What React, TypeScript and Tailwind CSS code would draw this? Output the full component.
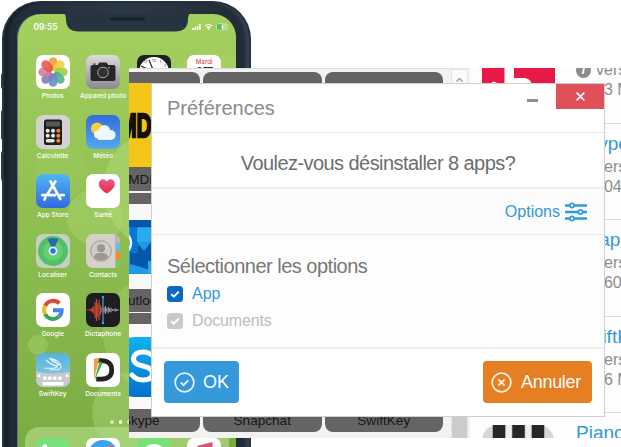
import React from "react";

const svgBox = "block size-[34px]";

function Photos() {
  const petals = ["#f5973b", "#eed13c", "#9bcc4e", "#52ad8b", "#5a91c9", "#8079b4", "#d57a98", "#e45549"];
  return (
    <svg className={svgBox} viewBox="0 0 34 34">
      <rect width="34" height="34" rx="7" fill="#fff" />
      {petals.map((c, i) => (
        <rect key={c} x="12.7" y="2.3" width="8.6" height="13.4" rx="4.3" fill={c} opacity=".87" transform={`rotate(${i * 45} 17 17)`} />
      ))}
    </svg>
  );
}

function Camera() {
  return (
    <svg className={svgBox} viewBox="0 0 34 34">
      <defs>
        <linearGradient id="cam" x2="0" y2="1"><stop stopColor="#dcdcdc" /><stop offset="1" stopColor="#8b8b8d" /></linearGradient>
      </defs>
      <rect width="34" height="34" rx="7" fill="url(#cam)" />
      <path d="M6.5 10h5.3l1.4-2.6h7.5l1.5 2.6h5.3q2 0 2 2v12q0 2-2 2h-21q-2 0-2-2V12q0-2 2-2Z" fill="#262728" />
      <rect x="7" y="8.6" width="3" height="1" fill="#333" />
      <circle cx="17" cy="17.5" r="5.3" fill="#303133" stroke="#aaa" strokeWidth="1" />
      <circle cx="23" cy="12.7" r=".8" fill="#e5c24b" />
    </svg>
  );
}

function Calculator() {
  return (
    <svg className={svgBox} viewBox="0 0 34 34">
      <rect width="34" height="34" rx="7" fill="#d3d2d0" />
      <rect x="8" y="4.5" width="18" height="25.5" rx="2.5" fill="#1f1e1f" />
      <rect x="10" y="6.5" width="14" height="5" rx=".8" fill="#58595b" />
      {[15.8, 20.8, 25.8].map((y, r) =>
        [11.7, 17, 22.3].map((x, c) =>
          r === 2 && c === 1 ? null : r === 2 && c === 0 ? (
            <rect key={c} x="9.7" y="24" width="9" height="3.6" rx="1.8" fill="#e6e6e6" />
          ) : (
            <circle key={`${r}${c}`} cx={x} cy={y} r="2" fill={c === 2 ? "#f28a2b" : "#e6e6e6"} />
          ),
        ),
      )}
    </svg>
  );
}

function Weather() {
  return (
    <svg className={svgBox} viewBox="0 0 34 34">
      <defs>
        <linearGradient id="met" x2="0" y2="1"><stop stopColor="#326cdb" /><stop offset="1" stopColor="#57a9ee" /></linearGradient>
      </defs>
      <rect width="34" height="34" rx="7" fill="url(#met)" />
      <circle cx="11" cy="13.5" r="6" fill="#f8cf45" />
      <g fill="#f0f6fc">
        <circle cx="18.5" cy="15.6" r="5.6" /><circle cx="12" cy="19.5" r="3.9" /><circle cx="24.7" cy="20" r="4.9" />
        <rect x="12" y="16" width="13" height="8.9" />
      </g>
    </svg>
  );
}

function AppStore() {
  return (
    <svg className={svgBox} viewBox="0 0 34 34">
      <defs>
        <linearGradient id="sto" x2="0" y2="1"><stop stopColor="#4fb6f4" /><stop offset="1" stopColor="#3269e1" /></linearGradient>
      </defs>
      <rect width="34" height="34" rx="7" fill="url(#sto)" />
      <path d="m14.6 7.5 9.8 17.6M19.4 7.5 10.8 21.2M6.3 21.2H19M24.4 21.2h3.3M9.3 24l-.9 1.6" stroke="#fff" strokeWidth="2.7" strokeLinecap="round" fill="none" />
    </svg>
  );
}

function Health() {
  return (
    <svg className={svgBox} viewBox="0 0 34 34">
      <defs>
        <linearGradient id="hea" x2="0" y2="1"><stop stopColor="#e9579b" /><stop offset="1" stopColor="#e22e36" /></linearGradient>
      </defs>
      <rect width="34" height="34" rx="7" fill="#fff" />
      <path d="M20.8 19.5c-5-3.2-8-6.2-8-9.6 0-5 6-6.2 8-2.4 2-3.8 8-2.6 8 2.4 0 3.4-3 6.4-8 9.6Z" fill="url(#hea)" />
    </svg>
  );
}

function FindMy() {
  return (
    <svg className={svgBox} viewBox="0 0 34 34">
      <rect width="34" height="34" rx="7" fill="#c5cfc4" />
      <circle cx="17" cy="17" r="15" fill="#50c165" />
      <circle cx="17" cy="17" r="9.8" fill="#67ce73" />
      <path d="M17 17 11.5 5Q17 3 22.5 5Z" fill="#286ca7" />
      <circle cx="17" cy="17" r="4.4" fill="#e8f2ff" />
      <circle cx="17" cy="17" r="2.7" fill="#286ee5" />
    </svg>
  );
}

function Contacts() {
  return (
    <svg className={svgBox} viewBox="0 0 34 34">
      <defs><clipPath id="con"><rect width="34" height="34" rx="7" /></clipPath></defs>
      <g clipPath="url(#con)">
        <rect width="34" height="34" fill="#d5d1c8" />
        <rect x="30" width="4" height="8.5" fill="#bbb5ac" /><rect x="30" y="8.5" width="4" height="8.5" fill="#67bcee" />
        <rect x="30" y="17" width="4" height="9" fill="#f28b24" /><rect x="30" y="26" width="4" height="8" fill="#6fcd62" />
        <path d="M29.5 0v34" stroke="#aaa69c" strokeWidth=".7" />
      </g>
      <circle cx="15" cy="17" r="10.3" fill="#d2cdc4" stroke="#9d9890" strokeWidth=".9" />
      <circle cx="15" cy="14.2" r="4" fill="#9b9690" />
      <path d="M7.8 23.3c.9-4 3.7-4 5-4.4h4.4c1.5.5 4.2.5 5 4.4-3.9 4.2-10.5 4.2-14.4 0Z" fill="#9b9690" />
    </svg>
  );
}

function Google() {
  return (
    <svg className={svgBox} viewBox="0 0 34 34">
      <rect width="34" height="34" rx="7" fill="#fff" />
      <g fill="none" strokeWidth="3.9">
        <path d="M23.4 10.4A8.8 8.8 0 0 0 9.1 12.9" stroke="#e04837" />
        <path d="M9.1 12.9a8.8 8.8 0 0 0 0 8.2" stroke="#f2bb24" />
        <path d="M9.1 21.1a8.8 8.8 0 0 0 13.6 2.7" stroke="#3ba55b" />
        <path d="M22.7 23.8a8.8 8.8 0 0 0 3-6.5H17" stroke="#4184ef" />
      </g>
    </svg>
  );
}

function VoiceMemo() {
  const bars = [0.5, 0.5, 1, 1.5, 2.5, 4, 8, 11, 7, 10, 5, 2.5];
  return (
    <svg className={svgBox} viewBox="0 0 34 34">
      <rect width="34" height="34" rx="7" fill="#1d1d20" />
      <path d="M4 7v22M9 5v24M24 5v24M29 7v22" stroke="#424247" strokeWidth=".7" strokeDasharray=".7 3" />
      {bars.map((h, i) => <path key={i} d={`M${1.4 + i * 1.3} ${17 - h}v${2 * h}`} stroke="#cb4538" strokeWidth="1.2" />)}
      {[3, 5, 2, 4, 2, 3, 1, 1, 2, 1, 1].map((h, i) => <path key={i} d={`M${18 + i * 1.4} ${17 - h * 0.8}v${1.6 * h}`} stroke="#c6c6cc" strokeWidth=".9" />)}
      <path d="M17 4v26" stroke="#4d9de7" strokeWidth="1.2" /><circle cx="17" cy="4" r="1.2" fill="#4d9de7" /><circle cx="17" cy="30" r="1.2" fill="#4d9de7" />
    </svg>
  );
}

function SwiftKey() {
  return (
    <svg className={svgBox} viewBox="0 0 34 34">
      <defs>
        <clipPath id="swi"><rect width="34" height="34" rx="7" /></clipPath>
        <linearGradient id="swb" x2="0" y2="1"><stop stopColor="#55b3dc" /><stop offset="1" stopColor="#7dc1df" /></linearGradient>
      </defs>
      <g clipPath="url(#swi)">
        <rect width="34" height="34" fill="#c7c9cc" />
        <path d="M0 0h34v18.5q-17 4-34 0Z" fill="url(#swb)" />
      </g>
      <path d="M8.5 15.3h8q7-.5 4.5-5-2-3.2-6-5 9 2.5 10 8 0 4-7 3.4h-4.5M10 7q5 5 12 6.2M13 5q5 5 12 7" fill="none" stroke="#e7f6fd" strokeWidth="1.1" />
      {[8, 13, 18, 23].map((x) => <rect key={x} x={x - 0.8} y="23.5" width="3.4" height="3.3" rx=".5" fill="#fff" />)}
      <path d="M3 21.5v2.5M31 21.5v2.5" stroke="#fff" strokeWidth="2.5" />
      <rect x="6.5" y="29" width="21" height="3.4" rx=".6" fill="#fff" />
    </svg>
  );
}

function Documents() {
  return (
    <svg className={svgBox} viewBox="0 0 34 34">
      <rect width="34" height="34" rx="7" fill="#fff" />
      <path d="M12 7.7h3.2q10.5 0 10.5 9.2t-10.5 9.2h-5" fill="none" stroke="#222" strokeWidth="4.8" />
      <path d="M8 5.5h5.5L8 26Z" fill="#efa041" /><path d="m13.7 8 3 2L8 28.2Z" fill="#4bab55" />
    </svg>
  );
}

function Clock() {
  return (
    <svg className={svgBox} viewBox="0 0 34 34">
      <rect width="34" height="34" rx="7" fill="#202023" /><circle cx="17" cy="17" r="15" fill="#fff" />
      <path d="M17 17 12 5M17 17 4 11" stroke="#222" strokeWidth="1.2" />
      <g fill="#333" fontSize="4" fontFamily="Inter, sans-serif"><text x="14.8" y="6.5">12</text><text x="22.6" y="7.8">1</text><text x="27" y="12.2">2</text><text x="6.8" y="8.2">11</text></g>
    </svg>
  );
}

function Calendar() {
  return (
    <div className="h-[34px] w-[34px] rounded-[7px] bg-white pt-[4px] text-center leading-none">
      <div className="text-[6.2px] font-medium text-[#d85a50]">Mardi</div>
      <div className="text-[20px] leading-[21px] text-[#333]">17</div>
    </div>
  );
}

const phoneApps: [string, React.ReactNode][] = [
  ["Photos", <Photos />], ["Appareil photo", <Camera />], ["", <Clock />], ["", <Calendar />],
  ["Calculette", <Calculator />], ["Météo", <Weather />], ["", null], ["", null],
  ["App Store", <AppStore />], ["Santé", <Health />], ["", null], ["", null],
  ["Localiser", <FindMy />], ["Contacts", <Contacts />], ["", null], ["", null],
  ["Google", <Google />], ["Dictaphone", <VoiceMemo />], ["", null], ["", null],
  ["SwiftKey", <SwiftKey />], ["Documents", <Documents />],
];

function Wallpaper() {
  return (
    <svg className="absolute inset-0 h-[437px] w-[218px]" viewBox="0 0 218 437">
      <g fill="#b5dc7c">
        <circle cx="145" cy="175" r="60" opacity=".48" /><circle cx="77" cy="203" r="28" opacity=".32" />
        <circle cx="44" cy="158" r="26" opacity=".12" /><circle cx="145" cy="319" r="60" opacity=".3" />
        <circle cx="20" cy="331" r="10" opacity=".36" /><circle cx="114" cy="398" r="40" opacity=".38" />
        <circle cx="193" cy="90" r="52" opacity=".2" />
      </g>
    </svg>
  );
}

function Dock() {
  return (
    <div className="absolute top-[413px] left-[7px] flex h-14 w-[204px] gap-[16.5px] rounded-t-[14px] bg-[#b4dc87]/65 pt-[11px] pl-[10.5px]">
      <svg className={svgBox} viewBox="0 0 34 34">
        <rect width="34" height="34" rx="7" fill="#78e17d" /><path d="M6 10q0-4 4-4l3 6-3 3q3 6 9 8l3-3 6 4q-1 5-5 5Q9 26 6 10Z" fill="#fff" />
      </svg>
      <svg className={svgBox} viewBox="0 0 34 34">
        <rect width="34" height="34" rx="7" fill="#fff" /><circle cx="17" cy="17" r="15" fill="#3fa1e9" />
        <path d="m27 6-13 7-7 15 13-7Z" fill="#fff" /><path d="m27 6-13 7 6 8Z" fill="#e95245" />
      </svg>
      <svg className={svgBox} viewBox="0 0 34 34">
        <rect width="34" height="34" rx="7" fill="#77e277" /><ellipse cx="17" cy="17" rx="12" ry="11" fill="#fff" />
      </svg>
      <svg className={svgBox} viewBox="0 0 34 34">
        <rect width="34" height="34" rx="7" fill="#fff" /><path d="M12 25V9l12-3v17M12 10l12-3" fill="none" stroke="#d75674" strokeWidth="3" />
      </svg>
    </div>
  );
}

function Phone() {
  return (
    <div className="absolute top-0 left-0 h-[447px] w-[252px] overflow-hidden font-['Inter',sans-serif]">
      <div className="absolute top-[72px] left-px h-[18px] w-2 rounded-l bg-[#303b4a]" />
      <div className="absolute top-[109px] left-px h-8 w-2 rounded-l bg-[#303b4a]" />
      <div className="absolute top-[150px] left-px h-8 w-2 rounded-l bg-[#303b4a]" />
      <div className="absolute top-px left-[2px] h-[520px] w-[249px] rounded-[38px] border-x-2 border-t border-[#263341] bg-linear-to-r from-[#202b37] via-[#2b3947] to-[#202b37] shadow-[inset_4px_0_3px_#17202b,inset_-4px_0_3px_#35404e]">
        <div className="relative mt-[12px] ml-[14px] h-[500px] w-[218px] overflow-hidden rounded-t-[23px] bg-linear-to-b from-[#a4d05e] via-[#8ebd50] via-45% to-[#79aa42] to-90% shadow-[-1px_0_0_#66717a]">
          <Wallpaper />
          <svg className="absolute top-0 left-[44px] h-[18px] w-[130px]" viewBox="0 0 130 18">
            <path d="M0-1q4 0 4 6 0 12.5 13 12.5h96q13 0 13-12.5 0-6 4-6Z" fill="#263340" />
            <rect x="48" y="3.3" width="35" height="3.2" rx="1.6" fill="#18212c" />
          </svg>
          <div className="relative flex h-[41px] justify-between pt-[7.5px] pr-[7px] pl-[15.5px] text-[8.3px] leading-[10px] font-semibold text-white">
            <span>09:55</span>
            <svg className="mt-[1px] h-[8px] w-[38px]" viewBox="0 0 38 8">
              <path d="M2 5v2M4.3 4v3M6.6 3v4M8.9 1v6" stroke="#fff" strokeWidth="1.6" />
              <path d="M14 3q3.5-3 7 0M15.5 4.8q2-1.8 4 0" stroke="#fff" strokeWidth="1.2" fill="none" /><circle cx="17.5" cy="6.2" r=".9" fill="#fff" />
              <rect x="25.5" y=".8" width="11" height="6" rx="1.5" fill="#b4dc87" stroke="#d5eab9" strokeWidth=".6" /><rect x="26" y="1.2" width="5" height="5.2" rx="1" fill="#45c35d" />
              <path d="M29.5 4h4M31.5 2v4" stroke="#fff" strokeWidth=".8" />
            </svg>
          </div>
          <div className="relative grid grid-cols-[repeat(4,50.5px)] auto-rows-[59.5px] pl-[9.4px]">
            {phoneApps.map(([name, icon], i) => (
              <div key={i} className="flex flex-col items-center">
                {icon}
                <div className="mt-[3px] text-[6.6px] leading-[8px] font-medium whitespace-nowrap text-white">{name}</div>
              </div>
            ))}
          </div>
          <div className="absolute top-[406px] left-[92px] flex gap-[5px]">
            <i className="size-[3.5px] rounded-full bg-white/60" /><i className="size-[3.5px] rounded-full bg-white" /><i className="size-[3.5px] rounded-full bg-white/60" />
          </div>
          <Dock />
        </div>
      </div>
    </div>
  );
}

function Tile({ name, art }: { name?: string; art?: React.ReactNode }) {
  return (
    <div className="h-[119px] w-[118.5px] overflow-hidden rounded-[8px] bg-[#646464] text-center text-[13.6px] text-[#171717]">
      <div className="flex h-[99px] items-start justify-center pt-[11px]">{art}</div>
      <div className="leading-[17px]">{name}</div>
    </div>
  );
}

function ImdbArt() {
  return (
    <svg className="h-[84px] w-[86px] shrink-0 bg-[#f5c518]" viewBox="0 0 86 84">
      <text x="0" y="0" transform="translate(15.5 54) scale(.63 1)" fontSize="33" fontWeight="700" fontFamily="Liberation Sans, Arial, sans-serif" fill="#141008" stroke="#141008" strokeWidth="2.4">IMDb</text>
    </svg>
  );
}

function OutlookArt() {
  return (
    <svg className="h-[85px] w-[118px] shrink-0 bg-[#f8f8f8]" viewBox="0 0 118 85">
      <rect x="30" y="16" width="82" height="54" fill="#2098e8" />
      <path d="M40 16h72v7H40ZM48 41h9l5 6 7-9 8 8v14l-9 6-9-3-11-3Z" fill="#0757a9" />
      <path d="M48 23h8v26h-8ZM68 24h20v16H68Z" fill="#0875d2" /><path d="M55 24h15v14H55ZM66 57h22v13H66Z" fill="#28aaed" />
      <ellipse cx="44" cy="39" rx="5" ry="8" fill="none" stroke="#fff" strokeWidth="2.5" />
    </svg>
  );
}

function SkypeArt() {
  return (
    <svg className="h-[85px] w-[118px] shrink-0 bg-[#fafafa]" viewBox="0 0 118 85">
      <defs><linearGradient id="sky" x2="0" y2="1"><stop stopColor="#10b2f1" /><stop offset="1" stopColor="#0471ce" /></linearGradient></defs>
      <rect x="31" y="13" width="60" height="60" rx="22" fill="url(#sky)" />
      <path d="M71 32q-4-4-10-4-8 0-9.500 6-.5 6 9.500 8 10 2 9.500 8-1 6-9.500 6-7 0-11-5" fill="none" stroke="#fff" strokeWidth="5" strokeLinecap="round" />
    </svg>
  );
}

function ListRow({ name, size, icon }: { name: string; size: string; icon?: React.ReactNode }) {
  return (
    <div className="flex h-[96.5px] shrink-0 border-b border-[#dedede]">
      <div className="w-[106px] shrink-0 pt-[11px] pl-[12px]">{icon}</div>
      <div className="shrink-0 pt-[9px] text-[16px] leading-[20px] whitespace-nowrap text-[#8c8c8c]">
        <div className="mb-[2px] text-[19px] leading-[22px] text-[#3498db]">{name}</div>
        <div className="flex items-center gap-[5px]">
          <i className="flex size-[15px] items-center justify-center rounded-full bg-[#8c8c8c] text-[12px] leading-none font-bold text-white">i</i>version
        </div>
        <div className="flex items-center gap-[5px]"><i className="size-[13px] rounded-full border border-[#888]" /><span className="pl-px">{size}</span></div>
      </div>
    </div>
  );
}

function RedArt() {
  return (
    <svg className="h-[72px] w-[73px]" viewBox="0 0 73 72">
      <rect width="73" height="72" fill="#e71946" />
      <path d="M22.500 0h9.500v72h-9.500ZM8 46q4-5 8 0v26H8ZM31 40h12q7 1 7 9v23H31Z" fill="#fff" />
    </svg>
  );
}

function PianoArt() {
  return (
    <svg className="mt-[1px] h-[72px] w-[72px]" viewBox="0 0 72 72">
      <rect width="72" height="72" rx="15" fill="#d7d7d7" /><path d="M17 0v60M36.500 0v60M56 0v60" stroke="#25282a" strokeWidth="12.500" /><path d="M26.700 0v60M46.300 0v60" stroke="#eee" strokeWidth="5" />
    </svg>
  );
}

function ManagerWindow() {
  return (
    <div className="absolute top-[68px] left-[129px] flex h-[370px] w-[492px] overflow-hidden bg-[#f2f2f0]">
      <div className="h-full w-[322px] shrink-0 overflow-hidden border-t border-[#ddd]">
        <div className="-ml-[47.5px] grid w-[370px] grid-cols-[repeat(3,118.5px)] gap-x-[3px] gap-y-[1.5px] pt-[3px]">
          <Tile name="IMDb" art={<ImdbArt />} />
          <Tile art={<div className="h-[80px] w-[84px] bg-[#4e64a5]" />} />
          <Tile art={<div className="h-[80px] w-[54px] rounded-t-full bg-[#c9c9c9]" />} />
          <Tile name="Outlook" art={<OutlookArt />} />
          <Tile /><Tile />
          <Tile name="Skype" art={<SkypeArt />} />
          <Tile name="Snapchat" /><Tile name="SwiftKey" />
        </div>
      </div>
      <div className="flex w-[17px] shrink-0 flex-col border-x border-[#e5e5e5] bg-[#cbcbcb]">
        <div className="flex h-[16px] items-center justify-center border-t-2 border-[#e5e5e5] bg-[#fafafa] pt-1.5">
          <svg className="h-1 w-[7px]" viewBox="0 0 7 4"><path d="m.5 3.5 3-3 3 3" fill="none" stroke="#999" strokeWidth="1.3" /></svg>
        </div>
      </div>
      <div className="ml-[2px] flex flex-1 flex-col overflow-hidden bg-[#fdfdfd]">
        <div className="-mt-[41px] flex flex-col">
          <ListRow name="Pinterest" size="53 MB" icon={<RedArt />} />
          <ListRow name="Skype" size="104 MB" />
          <ListRow name="Snapchat" size="160 MB" />
          <ListRow name="SwiftKey" size="56 MB" />
          <ListRow name="Piano" size="42 MB" icon={<PianoArt />} />
        </div>
      </div>
    </div>
  );
}

function Checkbox({ color }: { color: string }) {
  return (
    <svg className="size-4" viewBox="0 0 16 16">
      <rect width="16" height="16" rx="3.5" fill={color} /><path d="m4.200 8.100 2.600 2.500 5-5" fill="none" stroke="#fff" strokeWidth="2" />
    </svg>
  );
}

function PreferencesDialog() {
  return (
    <div className="absolute top-[83px] left-[151px] flex h-[334px] w-[454px] flex-col border border-[#cfcfcf] bg-white text-[20px] text-[#777]">
      <header className="flex h-[49px] shrink-0 items-start justify-between border-b border-[#e9e9e9]">
        <h1 className="pt-[12px] pl-[15px] leading-[24px] text-[#8b8b8b]">Préférences</h1>
        <div className="flex">
          <div className="mt-[15px] mr-[18px] h-[3px] w-[11px] bg-[#929292]" />
          <button className="flex h-[25px] w-[48px] items-center justify-center bg-[#df5059] text-white">
            <svg className="size-[9px]" viewBox="0 0 9 9"><path d="m.7.7 7.600 7.600m0-7.600L.7 8.300" stroke="#fff" strokeWidth="1.7" /></svg>
          </button>
        </div>
      </header>
      <div className="flex h-[56px] shrink-0 items-center justify-center border-b-2 border-[#eee] pt-[6px] tracking-[-0.56px] text-[#6d6d6d]">Voulez-vous désinstaller 8 apps?</div>
      <div className="flex h-[46px] shrink-0 items-center justify-end gap-[5px] border-b border-[#eaeaea] bg-[#fcfcfc] pr-[17px] text-[16px] text-[#3498db]">
        <span className="pt-px">Options</span>
        <svg className="mt-px h-[20px] w-[22px]" viewBox="0 0 22 20">
          <path d="M0 3.500h22M0 10h22M0 16.500h22" stroke="#3498db" strokeWidth="2.4" />
          <g fill="#fff" stroke="#3498db" strokeWidth="1.6"><circle cx="7" cy="3.5" r="2.1" /><circle cx="15.500" cy="10" r="2.1" /><circle cx="7" cy="16.500" r="2.1" /></g>
        </svg>
      </div>
      <div className="h-[114px] shrink-0 border-b-2 border-[#eee] bg-[#fdfdfd] pt-[18px] pl-[15px]">
        <div className="leading-[26px] tracking-[-0.5px]">Sélectionner les options</div>
        <div className="mt-[3px] flex h-[24px] items-center gap-[9px] text-[16px] text-[#3498db]"><Checkbox color="#0969be" />App</div>
        <div className="mt-[3px] flex h-[24px] items-center gap-[9px] text-[16px] tracking-[-0.15px] text-[#bdbdbd]"><Checkbox color="#c9c9c9" />Documents</div>
      </div>
      <footer className="flex flex-1 items-start justify-between pt-[12px] pr-[12px] pl-[12px] text-[18px] text-white">
        <button className="flex h-[42px] w-[75px] items-center gap-[8px] rounded-[4px] bg-[#3498db] pl-[10px]">
          <svg className="size-[21px]" viewBox="0 0 22 22" fill="none" stroke="#e8f3fb"><circle cx="11" cy="11" r="9.8" strokeWidth="1.8" /><path d="m7.200 11 2.700 2.700 5-5" strokeWidth="2" /></svg>OK
        </button>
        <button className="flex h-[42px] w-[109px] items-center gap-[9px] rounded-[4px] bg-[#e67e22] pl-[8px] tracking-[-0.3px]">
          <svg className="size-[21px]" viewBox="0 0 22 22" fill="none" stroke="#fdf0e4"><circle cx="11" cy="11" r="9.8" strokeWidth="1.8" /><path d="m7.800 7.800 6.400 6.400m0-6.400-6.400 6.400" strokeWidth="2" /></svg>Annuler
        </button>
      </footer>
    </div>
  );
}

export default function App() {
  return (
    <main className="relative h-[447px] w-[621px] overflow-hidden bg-white font-['Liberation_Sans',Arial,sans-serif]">
      <Phone />
      <ManagerWindow />
      <PreferencesDialog />
    </main>
  );
}
